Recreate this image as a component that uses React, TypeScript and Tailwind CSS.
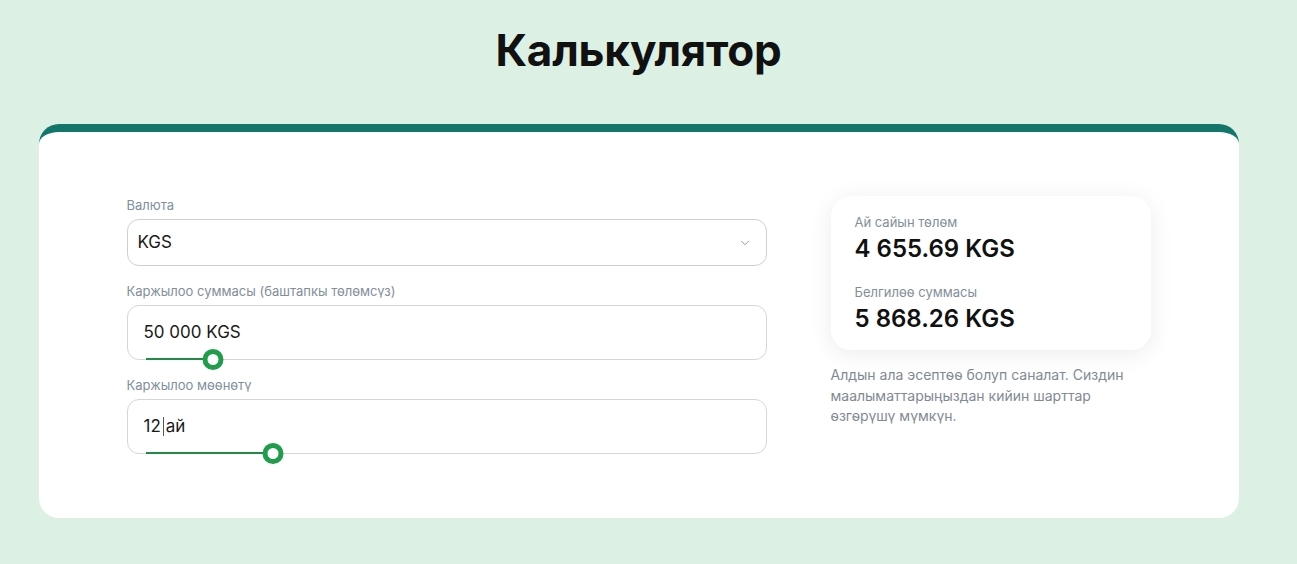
import { ChevronDown } from "lucide-react";

function Slider({ pos }: { pos: number }) {
  return (
    <div className="absolute left-[18px] right-[18px] bottom-0 h-0">
      <div
        className="absolute left-0 top-[-1px] h-[2px] bg-[#218a45]"
        style={{ width: pos }}
      />
      <div
        className="absolute top-[-10px] h-[21px] w-[21px] -translate-x-1/2 rounded-full border-[5px] border-[#1e9d4a] bg-white"
        style={{ left: pos }}
      />
    </div>
  );
}

export default function App() {
  return (
    <div className="min-h-[564px] bg-[#ddf0e4] pt-[24px] font-['Inter',sans-serif] text-[#111]">
      <div className="w-[1277px]">
        <h1 className="text-center text-[44px] font-bold leading-[52px] tracking-[-0.2px] text-[#111]">
          Калькулятор
        </h1>
        <div className="mx-auto mt-[48px] w-[1200px] rounded-[20px] border-t-[8px] border-[#12766a] bg-white px-[88px] pt-[64px] pb-[64px]">
          <div className="flex items-start gap-[64px]">
            <div className="w-[640px]">
              <label className="block text-[13px] leading-[18px] text-[#7f8f9c]">Валюта</label>
              <div className="mt-[5px] flex h-[47px] items-center justify-between rounded-[12px] border border-[#cfcfcf] pl-[10px] pr-[14px]">
                <span className="text-[17px] text-[#1a1a1a]">KGS</span>
                <ChevronDown size={14} strokeWidth={1.5} className="text-[#8a8a8a]" />
              </div>

              <label className="mt-[16px] block text-[13px] leading-[18px] text-[#7f8f9c]">
                Каржылоо суммасы (баштапкы төлөмсүз)
              </label>
              <div className="relative mt-[5px] flex h-[55px] items-center rounded-[12px] border border-[#d6d6d6] px-[16px]">
                <span className="text-[17px] text-[#1a1a1a]">50 000 KGS</span>
                <Slider pos={67} />
              </div>

              <label className="mt-[16px] block text-[13px] leading-[18px] text-[#7f8f9c]">Каржылоо мөөнөтү</label>
              <div className="relative mt-[5px] flex h-[55px] items-center rounded-[12px] border border-[#d6d6d6] px-[16px]">
                <span className="flex items-center text-[17px] text-[#1a1a1a]">
                  12
                  <span className="mx-[2px] inline-block h-[19px] w-px bg-[#555]" />
                  ай
                </span>
                <Slider pos={127} />
              </div>
            </div>

            <div className="w-[320px]">
              <div className="rounded-[20px] bg-white px-[24px] pt-[17px] pb-[15px] shadow-[0_4px_24px_rgba(0,0,0,0.08)]">
                <div className="text-[13px] leading-[18px] text-[#7f8f9c]">Ай сайын төлөм</div>
                <div className="mt-[2px] text-[24px] font-semibold leading-[32px] text-[#111]">4 655.69 KGS</div>
                <div className="mt-[18px] text-[13px] leading-[18px] text-[#7f8f9c]">Белгилөө суммасы</div>
                <div className="mt-[2px] text-[24px] font-semibold leading-[32px] text-[#111]">5 868.26 KGS</div>
              </div>
              <p className="mt-[15px] pr-[20px] text-[14px] leading-[20.5px] text-[#7f8a93]">
                Алдын ала эсептөө болуп саналат. Сиздин маалыматтарыңыздан кийин шарттар өзгөрүшү мүмкүн.
              </p>
            </div>
          </div>
        </div>
      </div>
    </div>
  );
}
